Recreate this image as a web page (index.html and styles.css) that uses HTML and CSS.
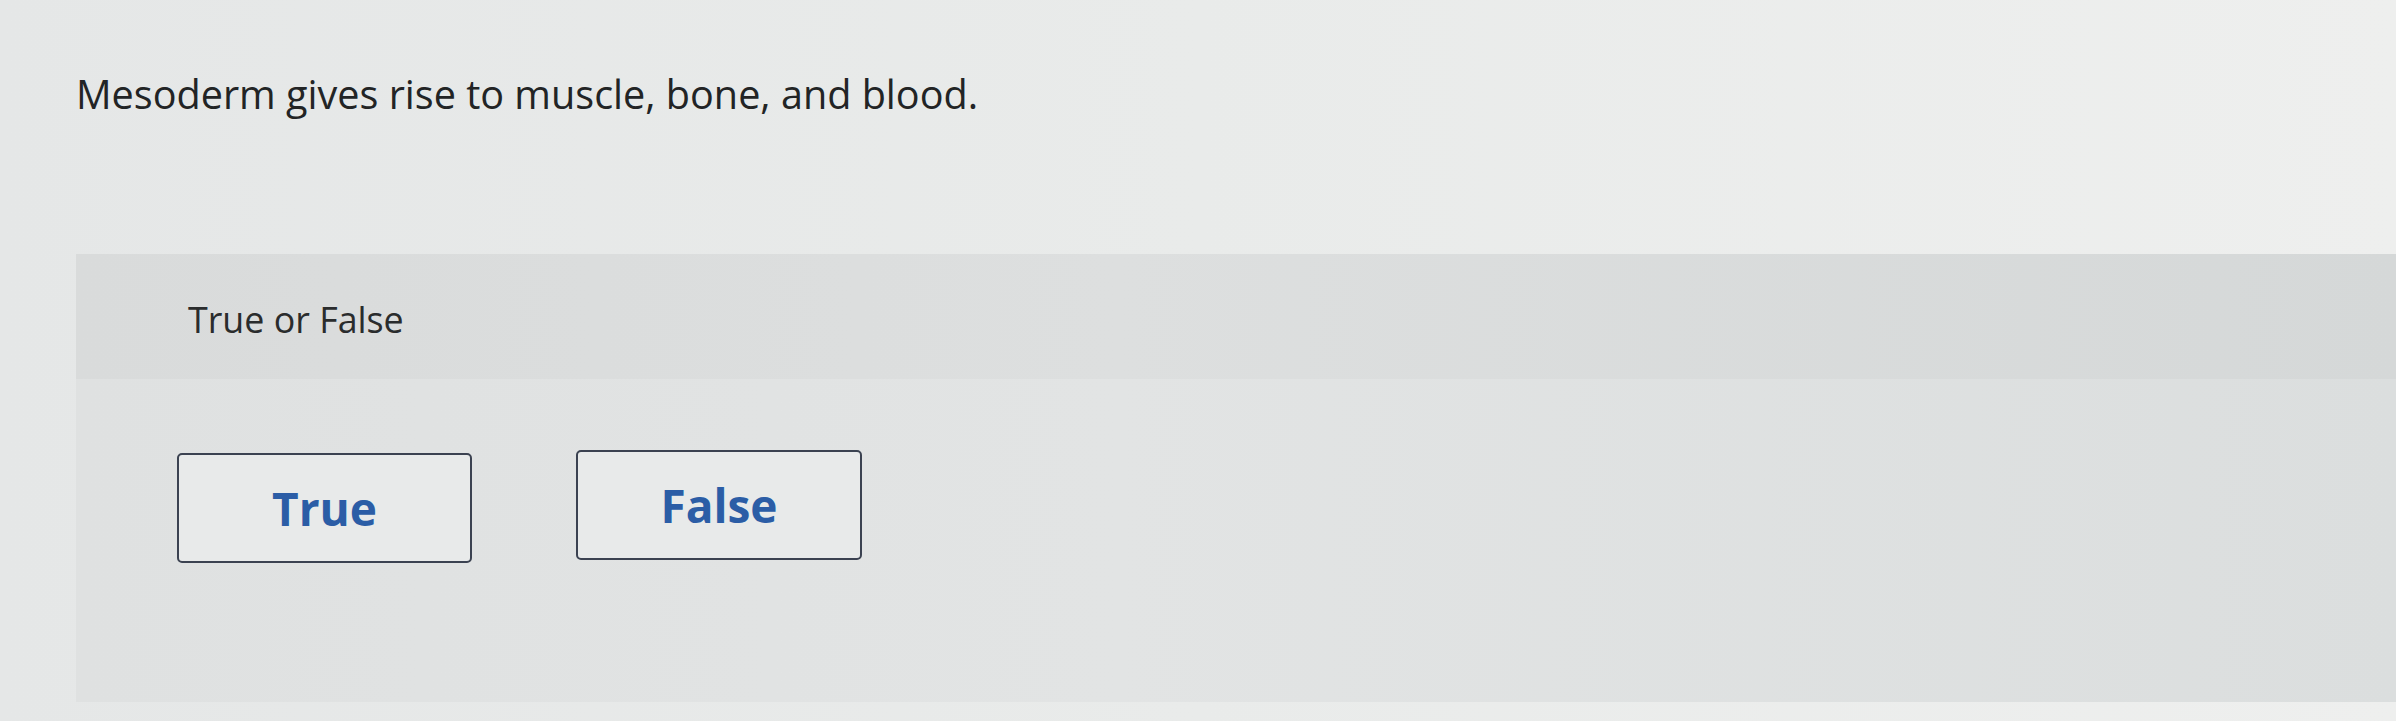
FILE: index.html
```html
<!DOCTYPE html>
<html lang="en">
<head>
    <meta charset="UTF-8">
    <meta name="viewport" content="width=device-width, initial-scale=1.0">
    <title>True or False</title>
    <link rel="stylesheet" href="styles.css">
</head>
<body>
    <div class="question">
        <p class="prompt">Mesoderm gives rise to muscle, bone, and blood.</p>
    </div>

    <div class="answer-panel">
        <div class="panel-head">
            <span>True or False</span>
        </div>
        <div class="panel-body">
            <button class="choice choice-true">True</button>
            <button class="choice choice-false">False</button>
        </div>
    </div>
</body>
</html>
```

FILE: styles.css
```css
body {
    margin: 0;
    height: 721px;
    overflow: hidden;
    background: linear-gradient(90deg, #e5e7e7 0%, #e9ebea 50%, #eeefee 100%);
    font-family: "Open Sans", "Liberation Sans", sans-serif;
    color: #262829;
}

.question {
    padding: 71px 0 0 76px;
    height: 254px;
    box-sizing: border-box;
}

.prompt {
    margin: 0;
    font-size: 39.6px;
    line-height: 1.2;
    color: #222425;
}

/* grey box with the choices */
.answer-panel {
    margin-left: 76px;
    height: 448px;
    background: linear-gradient(90deg, #dfe1e1 0%, #e2e4e4 45%, #dbdede 100%);
}

.panel-head {
    height: 125px;
    box-sizing: border-box;
    padding: 44px 0 0 112px;
    background: linear-gradient(90deg, #d9dbdb 0%, #dddfdf 45%, #d5d8d8 100%);
    font-size: 35.8px;
    line-height: 1.2;
    color: #2a2c2d;
}

.panel-body {
    display: flex;
    align-items: flex-start;
    gap: 104px;
    padding: 71px 0 0 101px;
}

.choice {
    height: 110px;
    border: 2px solid #3b4251;
    border-radius: 5px;
    background-color: #e8eaea;
    font-family: "Open Sans", "Liberation Sans", sans-serif;
    font-weight: bold;
    font-size: 46px;
    color: #2b5da6;
    cursor: pointer;
}

.choice-true {
    width: 295px;
    margin-top: 3px;
}

.choice-false {
    width: 286px;
}
```
